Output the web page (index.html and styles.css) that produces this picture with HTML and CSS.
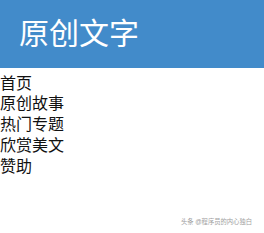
FILE: index.html
```html
<!DOCTYPE html>
<html lang="zh">
<head>
<meta charset="utf-8">
<link rel="stylesheet" href="styles.css">
</head>
<body>
<header class="banner"><h1 class="title">原创文字</h1></header>
<ul class="nav">
  <li>首页</li>
  <li>原创故事</li>
  <li>热门专题</li>
  <li>欣赏美文</li>
  <li>赞助</li>
</ul>
<div class="watermark">头条 @程序员的内心独白</div>
</body>
</html>
```

FILE: styles.css
```css
html, body {
  margin: 0;
  padding: 0;
  background: #ffffff;
}
body {
  position: relative;
  width: 264px;
  height: 233px;
  overflow: hidden;
  font-family: "Liberation Sans", "Noto Sans CJK SC", sans-serif;
}
.banner {
  background: #428bca;
  height: 68px;
  display: flex;
  align-items: center;
  padding-left: 19px;
}
.title {
  margin: 0;
  color: #ffffff;
  font-size: 30px;
  font-weight: normal;
  line-height: 1;
}
.nav {
  list-style: none;
  margin: 5.5px 0 0 0;
  padding: 0;
  color: #111111;
  font-size: 16px;
  line-height: 20.8px;
}
.watermark {
  position: absolute;
  right: 12px;
  bottom: 7px;
  font-size: 6.3px;
  line-height: 9px;
  color: #8f8f8f;
  opacity: 0.85;
}
```
